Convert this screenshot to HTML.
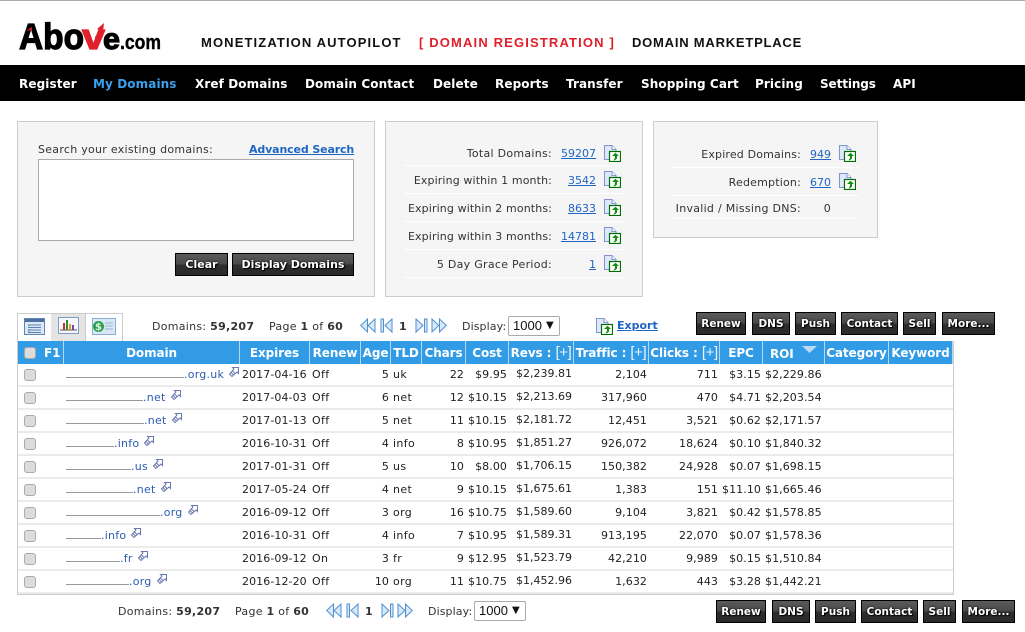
<!DOCTYPE html>
<html><head><meta charset="utf-8"><title>Above.com</title>
<style>
html,body{margin:0;padding:0;background:#fff}
body{position:relative;width:1025px;height:632px;overflow:hidden;font:11px/14px "DejaVu Sans",sans-serif;color:#333;border-top:1px solid #aaa;box-sizing:border-box}
#p{position:absolute;left:0;top:-1px;width:1025px;height:632px}
.a{position:absolute;white-space:nowrap}
.t{letter-spacing:.28px}
.top{top:35px;font:bold 13px/16px "Liberation Sans",sans-serif;color:#111}
#nav{position:absolute;left:0;top:65px;width:1025px;height:36px;background:#000}
#nav span{position:absolute;top:12px;font:bold 12px/15px "DejaVu Sans",sans-serif;color:#fff;letter-spacing:.1px;white-space:nowrap}
.pn{position:absolute;background:#f5f5f5;border:1px solid #ccc;box-sizing:border-box}
.btn{position:absolute;box-sizing:border-box;height:23px;border:1px solid #000;background:linear-gradient(#5a5a5a 0,#4a4a4a 48%,#2e2e2e 52%,#2a2a2a 100%);color:#fff;font:bold 10.5px/22px "DejaVu Sans",sans-serif;text-align:center;text-shadow:0 0 2px #000,1px 1px 1px #000;white-space:nowrap}
a{color:#1f66c4}
.r{position:absolute;text-align:right;white-space:nowrap}
div.r{letter-spacing:.28px}
div.r.e{letter-spacing:.12px}
.sep{position:absolute;height:1px;background:#fff}
.fi{position:absolute;width:17px;height:17px}
b{color:#333}
.sel{position:absolute;box-sizing:border-box;width:52px;height:20px;border:1px solid #aaa;border-radius:2px;background:#fff;font:13px/18px "Liberation Sans",sans-serif;color:#111;padding-left:4px}
.sel i{position:absolute;left:37px;top:0;font:normal 10px/17px "DejaVu Sans",sans-serif;color:#111}
.pi{position:absolute;width:16px;height:15px}
table{position:absolute;left:18px;top:341px;border-collapse:separate;border-spacing:0;table-layout:fixed;width:935px}
th{height:23px;padding:0;background:#319be6;color:#fff;font:bold 12px/14px "DejaVu Sans",sans-serif;border-right:1px solid #b5d8f2;border-bottom:0;text-align:center;white-space:nowrap;overflow:hidden;letter-spacing:-.1px}
th u{text-decoration:none;font:normal 15px/14px "Liberation Sans",sans-serif;letter-spacing:-.4px;color:#eaf5fd}
td{height:21px;padding:0 2px;border-bottom:2px solid #ebebeb;color:#222;font:11px/14px "DejaVu Sans",sans-serif;white-space:nowrap;overflow:visible;letter-spacing:.08px}
td.n{text-align:right}
td.d{padding-left:2px;color:#2a5db0;letter-spacing:.25px}
td:nth-child(4),td:nth-child(6){letter-spacing:.35px}
.l{display:inline-block;height:1px;background:#999;vertical-align:0}
.w{display:inline-block;width:10px;height:10px;margin-left:5px;vertical-align:1px}
.cb{display:block;box-sizing:border-box;width:12px;height:12px;margin-left:4px;background:#dcdcdc;border:1px solid #aaa;border-radius:3px}
.rv{position:relative;top:-1px;padding-left:5px;letter-spacing:0}
#box{position:absolute;left:17px;top:341px;width:937px;height:254px;box-sizing:border-box;border:1px solid #ccc;border-top:0;z-index:2}
</style></head><body>
<svg width="0" height="0" style="position:absolute">
<symbol id="f" viewBox="0 0 17 17"><path d="M.5.5H8L12 4.5V14.5H.5Z" fill="#dfe7fa" stroke="#7f96cc"/><path d="M8 .5V4.5H12" fill="#fff" stroke="#7f96cc"/><rect x="5.5" y="6.5" width="11" height="10" fill="#fff" stroke="#006e00" stroke-width="1.2"/><path d="M11.5 7.8L15 11H13V13.5L11 15.2H9.5L11 13V11H8Z" fill="#0f8f0f"/></symbol>
<symbol id="w" viewBox="0 0 10 10"><path d="M3.5 .5H9.5V6.5L8 5 3 9.5 .5 7 5 2ZM2 5.500L4.500 8M3.500 4L6 6.500" fill="none" stroke="#6a78b0"/></symbol>
<symbol id="ff" viewBox="0 0 16 15"><path d="M7.500 1V14L.7 7.500ZM15 1V14L8 7.500Z" fill="#d8e9fa" stroke="#4f8fd0"/></symbol>
<symbol id="pv" viewBox="0 0 16 15"><path d="M1 1H3.500V14H1ZM12 1V14L5 7.500Z" fill="#d8e9fa" stroke="#4f8fd0"/></symbol>
<symbol id="nx" viewBox="0 0 16 15"><path d="M15 1H12.500V14H15ZM4 1V14L11 7.500Z" fill="#d8e9fa" stroke="#4f8fd0"/></symbol>
<symbol id="ll" viewBox="0 0 16 15"><path d="M1 1V14L7.800 7.500ZM8.500 1V14L15.300 7.500Z" fill="#d8e9fa" stroke="#4f8fd0"/></symbol>
</svg>
<div id="p">
<svg class="a" style="left:17px;top:18px" width="148" height="36" viewBox="0 0 148 36">
<text x="2" y="31" font-family="Liberation Sans" font-weight="bold" font-size="36" stroke="#000" stroke-width="1.2" textLength="65" lengthAdjust="spacingAndGlyphs">Abo</text>
<text x="65" y="31" font-family="Liberation Sans" font-weight="bold" font-size="36" fill="#e0202a" stroke="#e0202a" stroke-width="1.2" textLength="23" lengthAdjust="spacingAndGlyphs">v</text>
<text x="86" y="31" font-family="Liberation Sans" font-weight="bold" font-size="30" stroke="#000" stroke-width="1.2" textLength="17" lengthAdjust="spacingAndGlyphs">e</text>
<text x="103" y="31" font-family="Liberation Sans" font-weight="bold" font-size="20" stroke="#000" stroke-width=".4" textLength="41" lengthAdjust="spacingAndGlyphs">.com</text>
<path d="M78 19L83 12L80 11L87 5L86 14L84 13L79 24Z" fill="#e0202a"/>
<path d="M9 13L15 9L15 13L13 12Z" fill="#e0202a"/>
</svg>
<div class="a top" style="left:201px;letter-spacing:1.12px">MONETIZATION AUTOPILOT</div>
<div class="a top" style="left:419px;color:#e0202a;letter-spacing:1.15px">[ DOMAIN REGISTRATION ]</div>
<div class="a top" style="left:632px;letter-spacing:.78px">DOMAIN MARKETPLACE</div>
<div id="nav">
<span style="left:19px">Register</span><span style="left:93px;color:#3ba0ee">My Domains</span><span style="left:195px">Xref Domains</span><span style="left:305px">Domain Contact</span><span style="left:433px">Delete</span><span style="left:495px">Reports</span><span style="left:566px">Transfer</span><span style="left:641px">Shopping Cart</span><span style="left:755px">Pricing</span><span style="left:820px;letter-spacing:-.1px">Settings</span><span style="left:893px">API</span>
</div>

<div class="pn" style="left:17px;top:121px;width:358px;height:176px"></div>
<div class="a t" style="left:38px;top:143px">Search your existing domains:</div>
<a class="a" href="#" style="left:249px;top:143px;font-weight:bold;letter-spacing:-.13px">Advanced Search</a>
<div class="a" style="left:38px;top:159px;width:316px;height:82px;box-sizing:border-box;background:#fff;border:1px solid #aaa"></div>
<div class="btn" style="left:175px;top:253px;width:53px;font-size:11px">Clear</div>
<div class="btn" style="left:232px;top:253px;width:122px;font-size:11px">Display Domains</div>

<div class="pn" style="left:385px;top:121px;width:258px;height:176px"></div>
<div class="r" style="right:473px;top:147px">Total Domains:</div><a class="r" href="#" style="right:429px;top:147px">59207</a><svg class="fi" style="left:604px;top:145px"><use href="#f"/></svg><div class="sep" style="left:404px;top:165px;width:220px"></div>
<div class="r e" style="right:473px;top:174px">Expiring within 1 month:</div><a class="r" href="#" style="right:429px;top:174px">3542</a><svg class="fi" style="left:604px;top:171px"><use href="#f"/></svg><div class="sep" style="left:404px;top:193px;width:220px"></div>
<div class="r e" style="right:473px;top:202px">Expiring within 2 months:</div><a class="r" href="#" style="right:429px;top:202px">8633</a><svg class="fi" style="left:604px;top:199px"><use href="#f"/></svg><div class="sep" style="left:404px;top:221px;width:220px"></div>
<div class="r e" style="right:473px;top:230px">Expiring within 3 months:</div><a class="r" href="#" style="right:429px;top:230px">14781</a><svg class="fi" style="left:604px;top:227px"><use href="#f"/></svg><div class="sep" style="left:404px;top:249px;width:220px"></div>
<div class="r" style="right:473px;top:258px">5 Day Grace Period:</div><a class="r" href="#" style="right:429px;top:258px">1</a><svg class="fi" style="left:604px;top:255px"><use href="#f"/></svg><div class="sep" style="left:404px;top:277px;width:220px"></div>

<div class="pn" style="left:653px;top:121px;width:225px;height:117px"></div>
<div class="r e" style="right:224px;top:148px;letter-spacing:.16px">Expired Domains:</div><a class="r" href="#" style="right:194px;top:148px">949</a><svg class="fi" style="left:839px;top:145px"><use href="#f"/></svg><div class="sep" style="left:672px;top:167px;width:187px"></div>
<div class="r" style="right:224px;top:176px;letter-spacing:.2px">Redemption:</div><a class="r" href="#" style="right:194px;top:176px">670</a><svg class="fi" style="left:839px;top:173px"><use href="#f"/></svg><div class="sep" style="left:672px;top:195px;width:187px"></div>
<div class="r" style="right:224px;top:202px">Invalid / Missing DNS:</div><div class="r" style="right:194px;top:202px">0</div><div class="sep" style="left:672px;top:218px;width:187px"></div>

<div class="a" style="left:17px;top:313px;width:35px;height:28px;box-sizing:border-box;border:1px solid #ccc;border-bottom:0"></div>
<div class="a" style="left:51px;top:313px;width:35px;height:28px;box-sizing:border-box;background:#e4e4e4;border-top:1px solid #ccc"></div>
<div class="a" style="left:85px;top:313px;width:38px;height:28px;box-sizing:border-box;border:1px solid #ccc;border-bottom:0"></div>
<svg class="a" style="left:24px;top:318px" width="21" height="17"><rect x=".5" y=".5" width="20" height="16" fill="#dbe8f7" stroke="#5f86b8"/><rect x="1" y="1" width="19" height="3" fill="#4f6f9f"/><path d="M4 7H17M4 9.500H17M4 12H17M4 14.500H17" stroke="#5e7fb0"/><path d="M5 7V15" stroke="#2a9a4a" stroke-dasharray="1 1"/></svg>
<svg class="a" style="left:58px;top:317px" width="21" height="17"><rect x=".5" y=".5" width="20" height="16" fill="#f5f8fc" stroke="#7f9cc0"/><path d="M2 13H19" stroke="#555"/><rect x="5" y="6" width="2" height="7" fill="#c8322a"/><rect x="8" y="3" width="2" height="10" fill="#2f8a3a"/><rect x="11" y="7" width="2" height="6" fill="#d9a020"/><rect x="14" y="8" width="2" height="5" fill="#7a3fb0"/></svg>
<svg class="a" style="left:92px;top:318px" width="24" height="17"><rect x=".5" y=".5" width="23" height="16" fill="#d8e8f7" stroke="#8aacd0"/><circle cx="6.500" cy="8.500" r="5.500" fill="#2aa04a"/><text x="6.500" y="12" text-anchor="middle" font-family="DejaVu Sans" font-weight="bold" font-size="10" fill="#dff5e0">$</text><path d="M13 5H21M13 8H21M13 11H21" stroke="#9ab4d4"/></svg>

<div class="a t" style="left:152px;top:320px">Domains: <b>59,207</b></div>
<div class="a t" style="left:269px;top:320px">Page <b>1</b> of <b>60</b></div>
<svg class="pi" style="left:360px;top:318px"><use href="#ff"/></svg><svg class="pi" style="left:380px;top:318px"><use href="#pv"/></svg>
<div class="a" style="left:399px;top:320px;font-weight:bold">1</div>
<svg class="pi" style="left:412px;top:318px"><use href="#nx"/></svg><svg class="pi" style="left:431px;top:318px"><use href="#ll"/></svg>
<div class="a" style="left:462px;top:320px;letter-spacing:.1px">Display:</div>
<div class="sel" style="left:508px;top:316px">1000<i>▼</i></div>
<svg class="fi" style="left:596px;top:318px"><use href="#f"/></svg>
<a class="a" href="#" style="left:617px;top:319px;font-weight:bold">Export</a>
<div class="btn" style="left:696px;top:312px;width:50px">Renew</div><div class="btn" style="left:752px;top:312px;width:38px">DNS</div><div class="btn" style="left:795px;top:312px;width:41px">Push</div><div class="btn" style="left:841px;top:312px;width:57px">Contact</div><div class="btn" style="left:903px;top:312px;width:33px">Sell</div><div class="btn" style="left:942px;top:312px;width:53px">More...</div>

<div id="box"></div>
<table>
<colgroup><col style="width:46px"><col style="width:176px"><col style="width:70px"><col style="width:51px"><col style="width:30px"><col style="width:31px"><col style="width:44px"><col style="width:43px"><col style="width:65px"><col style="width:75px"><col style="width:71px"><col style="width:43px"><col style="width:62px"><col style="width:64px"><col style="width:64px"></colgroup>
<tr><th style="text-align:left"><span class="cb" style="display:inline-block;vertical-align:-2px;margin-left:6px;margin-right:8px"></span>F1</th><th>Domain</th><th>Expires</th><th>Renew</th><th>Age</th><th>TLD</th><th>Chars</th><th>Cost</th><th>Revs : <u>[+]</u></th><th>Traffic : <u>[+]</u></th><th>Clicks : <u>[+]</u></th><th>EPC</th><th style="text-align:left;padding-left:7px;box-sizing:border-box;position:relative"><span style="position:relative;top:1px">ROI</span><svg style="position:absolute;left:39px;top:5px" width="15" height="7"><path d="M0 0H15L7.500 7Z" fill="#bcd9f3"/></svg></th><th>Category</th><th>Keyword</th></tr>
<tr><td><span class="cb"></span></td><td class="d"><span class="l" style="width:118px"></span>.org.uk<svg class="w"><use href="#w"/></svg></td><td>2017-04-16</td><td>Off</td><td class="n">5</td><td>uk</td><td class="n">22</td><td class="n">$9.95</td><td><span class="rv">$2,239.81</span></td><td class="n">2,104</td><td class="n">711</td><td class="n">$3.15</td><td>$2,229.86</td><td></td><td></td></tr>
<tr><td><span class="cb"></span></td><td class="d"><span class="l" style="width:77px"></span>.net<svg class="w"><use href="#w"/></svg></td><td>2017-04-03</td><td>Off</td><td class="n">6</td><td>net</td><td class="n">12</td><td class="n">$10.15</td><td><span class="rv">$2,213.69</span></td><td class="n">317,960</td><td class="n">470</td><td class="n">$4.71</td><td>$2,203.54</td><td></td><td></td></tr>
<tr><td><span class="cb"></span></td><td class="d"><span class="l" style="width:78px"></span>.net<svg class="w"><use href="#w"/></svg></td><td>2017-01-13</td><td>Off</td><td class="n">5</td><td>net</td><td class="n">11</td><td class="n">$10.15</td><td><span class="rv">$2,181.72</span></td><td class="n">12,451</td><td class="n">3,521</td><td class="n">$0.62</td><td>$2,171.57</td><td></td><td></td></tr>
<tr><td><span class="cb"></span></td><td class="d"><span class="l" style="width:48px"></span>.info<svg class="w"><use href="#w"/></svg></td><td>2016-10-31</td><td>Off</td><td class="n">4</td><td>info</td><td class="n">8</td><td class="n">$10.95</td><td><span class="rv">$1,851.27</span></td><td class="n">926,072</td><td class="n">18,624</td><td class="n">$0.10</td><td>$1,840.32</td><td></td><td></td></tr>
<tr><td><span class="cb"></span></td><td class="d"><span class="l" style="width:65px"></span>.us<svg class="w"><use href="#w"/></svg></td><td>2017-01-31</td><td>Off</td><td class="n">5</td><td>us</td><td class="n">10</td><td class="n">$8.00</td><td><span class="rv">$1,706.15</span></td><td class="n">150,382</td><td class="n">24,928</td><td class="n">$0.07</td><td>$1,698.15</td><td></td><td></td></tr>
<tr><td><span class="cb"></span></td><td class="d"><span class="l" style="width:67px"></span>.net<svg class="w"><use href="#w"/></svg></td><td>2017-05-24</td><td>Off</td><td class="n">4</td><td>net</td><td class="n">9</td><td class="n">$10.15</td><td><span class="rv">$1,675.61</span></td><td class="n">1,383</td><td class="n">151</td><td class="n">$11.10</td><td>$1,665.46</td><td></td><td></td></tr>
<tr><td><span class="cb"></span></td><td class="d"><span class="l" style="width:94px"></span>.org<svg class="w"><use href="#w"/></svg></td><td>2016-09-12</td><td>Off</td><td class="n">3</td><td>org</td><td class="n">16</td><td class="n">$10.75</td><td><span class="rv">$1,589.60</span></td><td class="n">9,104</td><td class="n">3,821</td><td class="n">$0.42</td><td>$1,578.85</td><td></td><td></td></tr>
<tr><td><span class="cb"></span></td><td class="d"><span class="l" style="width:35px"></span>.info<svg class="w"><use href="#w"/></svg></td><td>2016-10-31</td><td>Off</td><td class="n">4</td><td>info</td><td class="n">7</td><td class="n">$10.95</td><td><span class="rv">$1,589.31</span></td><td class="n">913,195</td><td class="n">22,070</td><td class="n">$0.07</td><td>$1,578.36</td><td></td><td></td></tr>
<tr><td><span class="cb"></span></td><td class="d"><span class="l" style="width:54px"></span>.fr<svg class="w"><use href="#w"/></svg></td><td>2016-09-12</td><td>On</td><td class="n">3</td><td>fr</td><td class="n">9</td><td class="n">$12.95</td><td><span class="rv">$1,523.79</span></td><td class="n">42,210</td><td class="n">9,989</td><td class="n">$0.15</td><td>$1,510.84</td><td></td><td></td></tr>
<tr><td><span class="cb"></span></td><td class="d"><span class="l" style="width:63px"></span>.org<svg class="w"><use href="#w"/></svg></td><td>2016-12-20</td><td>Off</td><td class="n">10</td><td>org</td><td class="n">11</td><td class="n">$10.75</td><td><span class="rv">$1,452.96</span></td><td class="n">1,632</td><td class="n">443</td><td class="n">$3.28</td><td>$1,442.21</td><td></td><td></td></tr>
</table>

<div class="a t" style="left:118px;top:605px">Domains: <b>59,207</b></div>
<div class="a t" style="left:235px;top:605px">Page <b>1</b> of <b>60</b></div>
<svg class="pi" style="left:326px;top:603px"><use href="#ff"/></svg><svg class="pi" style="left:346px;top:603px"><use href="#pv"/></svg>
<div class="a" style="left:365px;top:605px;font-weight:bold">1</div>
<svg class="pi" style="left:378px;top:603px"><use href="#nx"/></svg><svg class="pi" style="left:397px;top:603px"><use href="#ll"/></svg>
<div class="a" style="left:428px;top:605px;letter-spacing:.1px">Display:</div>
<div class="sel" style="left:474px;top:601px">1000<i>▼</i></div>
<div class="btn" style="left:716px;top:600px;width:50px">Renew</div><div class="btn" style="left:772px;top:600px;width:38px">DNS</div><div class="btn" style="left:815px;top:600px;width:41px">Push</div><div class="btn" style="left:861px;top:600px;width:57px">Contact</div><div class="btn" style="left:923px;top:600px;width:33px">Sell</div><div class="btn" style="left:962px;top:600px;width:53px">More...</div>
</div>
</body></html>
